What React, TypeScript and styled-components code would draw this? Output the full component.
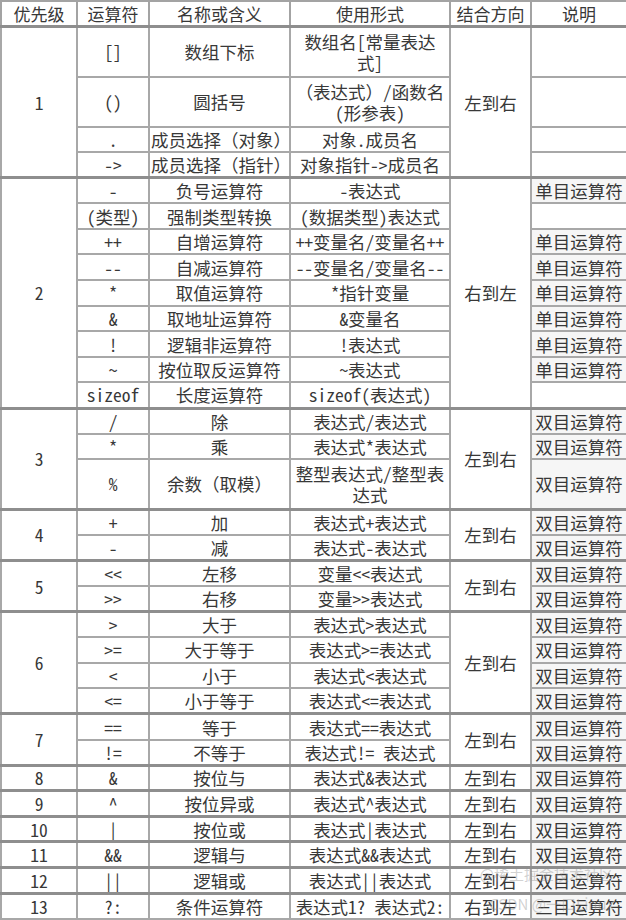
import React from 'react';
import styled, { createGlobalStyle, css } from 'styled-components';

const GlobalStyle = createGlobalStyle`
    html, body {
        margin: 0;
        padding: 0;
        background: #ffffff;
    }
`;

interface OpRow {
    op: string;
    name: string;
    usage: string;
    note: string;
    tall?: boolean;
}

interface OpGroup {
    level: string;
    dir: string;
    rows: OpRow[];
}

const UNARY = '单目运算符';
const BINARY = '双目运算符';

const groups: OpGroup[] = [
    {
        level: '1',
        dir: '左到右',
        rows: [
            { op: '[]', name: '数组下标', usage: '数组名[常量表达式]', note: '', tall: true },
            { op: '()', name: '圆括号', usage: '（表达式）/函数名(形参表)', note: '', tall: true },
            { op: '.', name: '成员选择（对象）', usage: '对象.成员名', note: '' },
            { op: '->', name: '成员选择（指针）', usage: '对象指针->成员名', note: '' },
        ],
    },
    {
        level: '2',
        dir: '右到左',
        rows: [
            { op: '-', name: '负号运算符', usage: '-表达式', note: UNARY },
            { op: '(类型)', name: '强制类型转换', usage: '(数据类型)表达式', note: '' },
            { op: '++', name: '自增运算符', usage: '++变量名/变量名++', note: UNARY },
            { op: '--', name: '自减运算符', usage: '--变量名/变量名--', note: UNARY },
            { op: '*', name: '取值运算符', usage: '*指针变量', note: UNARY },
            { op: '&', name: '取地址运算符', usage: '&变量名', note: UNARY },
            { op: '!', name: '逻辑非运算符', usage: '!表达式', note: UNARY },
            { op: '~', name: '按位取反运算符', usage: '~表达式', note: UNARY },
            { op: 'sizeof', name: '长度运算符', usage: 'sizeof(表达式)', note: '' },
        ],
    },
    {
        level: '3',
        dir: '左到右',
        rows: [
            { op: '/', name: '除', usage: '表达式/表达式', note: BINARY },
            { op: '*', name: '乘', usage: '表达式*表达式', note: BINARY },
            { op: '%', name: '余数（取模）', usage: '整型表达式/整型表达式', note: BINARY, tall: true },
        ],
    },
    {
        level: '4',
        dir: '左到右',
        rows: [
            { op: '+', name: '加', usage: '表达式+表达式', note: BINARY },
            { op: '-', name: '减', usage: '表达式-表达式', note: BINARY },
        ],
    },
    {
        level: '5',
        dir: '左到右',
        rows: [
            { op: '<<', name: '左移', usage: '变量<<表达式', note: BINARY },
            { op: '>>', name: '右移', usage: '变量>>表达式', note: BINARY },
        ],
    },
    {
        level: '6',
        dir: '左到右',
        rows: [
            { op: '>', name: '大于', usage: '表达式>表达式', note: BINARY },
            { op: '>=', name: '大于等于', usage: '表达式>=表达式', note: BINARY },
            { op: '<', name: '小于', usage: '表达式<表达式', note: BINARY },
            { op: '<=', name: '小于等于', usage: '表达式<=表达式', note: BINARY },
        ],
    },
    {
        level: '7',
        dir: '左到右',
        rows: [
            { op: '==', name: '等于', usage: '表达式==表达式', note: BINARY },
            { op: '!=', name: '不等于', usage: '表达式!= 表达式', note: BINARY },
        ],
    },
    { level: '8', dir: '左到右', rows: [{ op: '&', name: '按位与', usage: '表达式&表达式', note: BINARY }] },
    { level: '9', dir: '左到右', rows: [{ op: '^', name: '按位异或', usage: '表达式^表达式', note: BINARY }] },
    { level: '10', dir: '左到右', rows: [{ op: '|', name: '按位或', usage: '表达式|表达式', note: BINARY }] },
    { level: '11', dir: '左到右', rows: [{ op: '&&', name: '逻辑与', usage: '表达式&&表达式', note: BINARY }] },
    { level: '12', dir: '左到右', rows: [{ op: '||', name: '逻辑或', usage: '表达式||表达式', note: BINARY }] },
    { level: '13', dir: '右到左', rows: [{ op: '?:', name: '条件运算符', usage: '表达式1? 表达式2:', note: '三目运算符' }] },
];

const Page = styled.div`
    position: relative;
    width: 626px;
    height: 920px;
    overflow: hidden;
    font-family: "Noto Sans Mono CJK SC", "Liberation Mono", "Noto Sans CJK SC", monospace;
    color: #383838;
`;

const Table = styled.table`
    width: 626px;
    table-layout: fixed;
    border-collapse: collapse;
    border: 2px solid #9c9c9c;
`;

const Col = styled.col<{ $w: number }>`
    width: ${p => p.$w}px;
`;

const HeadCell = styled.th`
    height: 23px;
    padding: 0;
    font-size: 17px;
    font-weight: 400;
    line-height: 22px;
    text-align: center;
    border: 2px solid #a3a3a3;
    white-space: nowrap;
`;

const Row = styled.tr<{ $tall?: boolean; $first?: boolean }>`
    height: ${p => (p.$tall ? 50 : 25.6)}px;

    ${p => p.$first && css`
        & > td {
            border-top: 3px solid #8e8e8e;
        }
    `}
`;

const Cell = styled.td<{ $shade?: boolean }>`
    padding: 0 1px;
    font-size: 17.5px;
    font-weight: 300;
    line-height: 21px;
    text-align: center;
    vertical-align: middle;
    border: 2px solid #a8a8a8;
    background: ${p => (p.$shade ? '#f6f6f6' : '#ffffff')};
    overflow: hidden;
`;

const Watermark = styled.div`
    position: absolute;
    right: 12px;
    bottom: 8px;
    display: flex;
    flex-direction: column;
    align-items: flex-end;
    gap: 14px;
    font-family: "Noto Sans CJK SC", sans-serif;
    font-size: 15px;
    line-height: 16px;
    color: rgba(140, 140, 140, 0.4);
    pointer-events: none;
`;

const colWidths = [76, 72, 141, 160, 81, 96];

export default function App() {
    return (
        <Page>
            <GlobalStyle />
            <Table>
                <colgroup>
                    {colWidths.map((w, i) => <Col key={i} $w={w} />)}
                </colgroup>
                <thead>
                    <tr>
                        <HeadCell>优先级</HeadCell>
                        <HeadCell>运算符</HeadCell>
                        <HeadCell>名称或含义</HeadCell>
                        <HeadCell>使用形式</HeadCell>
                        <HeadCell>结合方向</HeadCell>
                        <HeadCell>说明</HeadCell>
                    </tr>
                </thead>
                <tbody>
                    {groups.map(g =>
                        g.rows.map((r, i) => (
                            <Row key={g.level + '-' + i} $tall={r.tall} $first={i === 0}>
                                {i === 0 && <Cell rowSpan={g.rows.length}>{g.level}</Cell>}
                                <Cell>{r.op}</Cell>
                                <Cell>{r.name}</Cell>
                                <Cell>{r.usage}</Cell>
                                {i === 0 && <Cell rowSpan={g.rows.length}>{g.dir}</Cell>}
                                <Cell $shade={r.note !== ''}>{r.note}</Cell>
                            </Row>
                        ))
                    )}
                </tbody>
            </Table>
            <Watermark>
                <span>@稀土掘金技术社区</span>
                <span>CSDN @一口Linux</span>
            </Watermark>
        </Page>
    );
}
